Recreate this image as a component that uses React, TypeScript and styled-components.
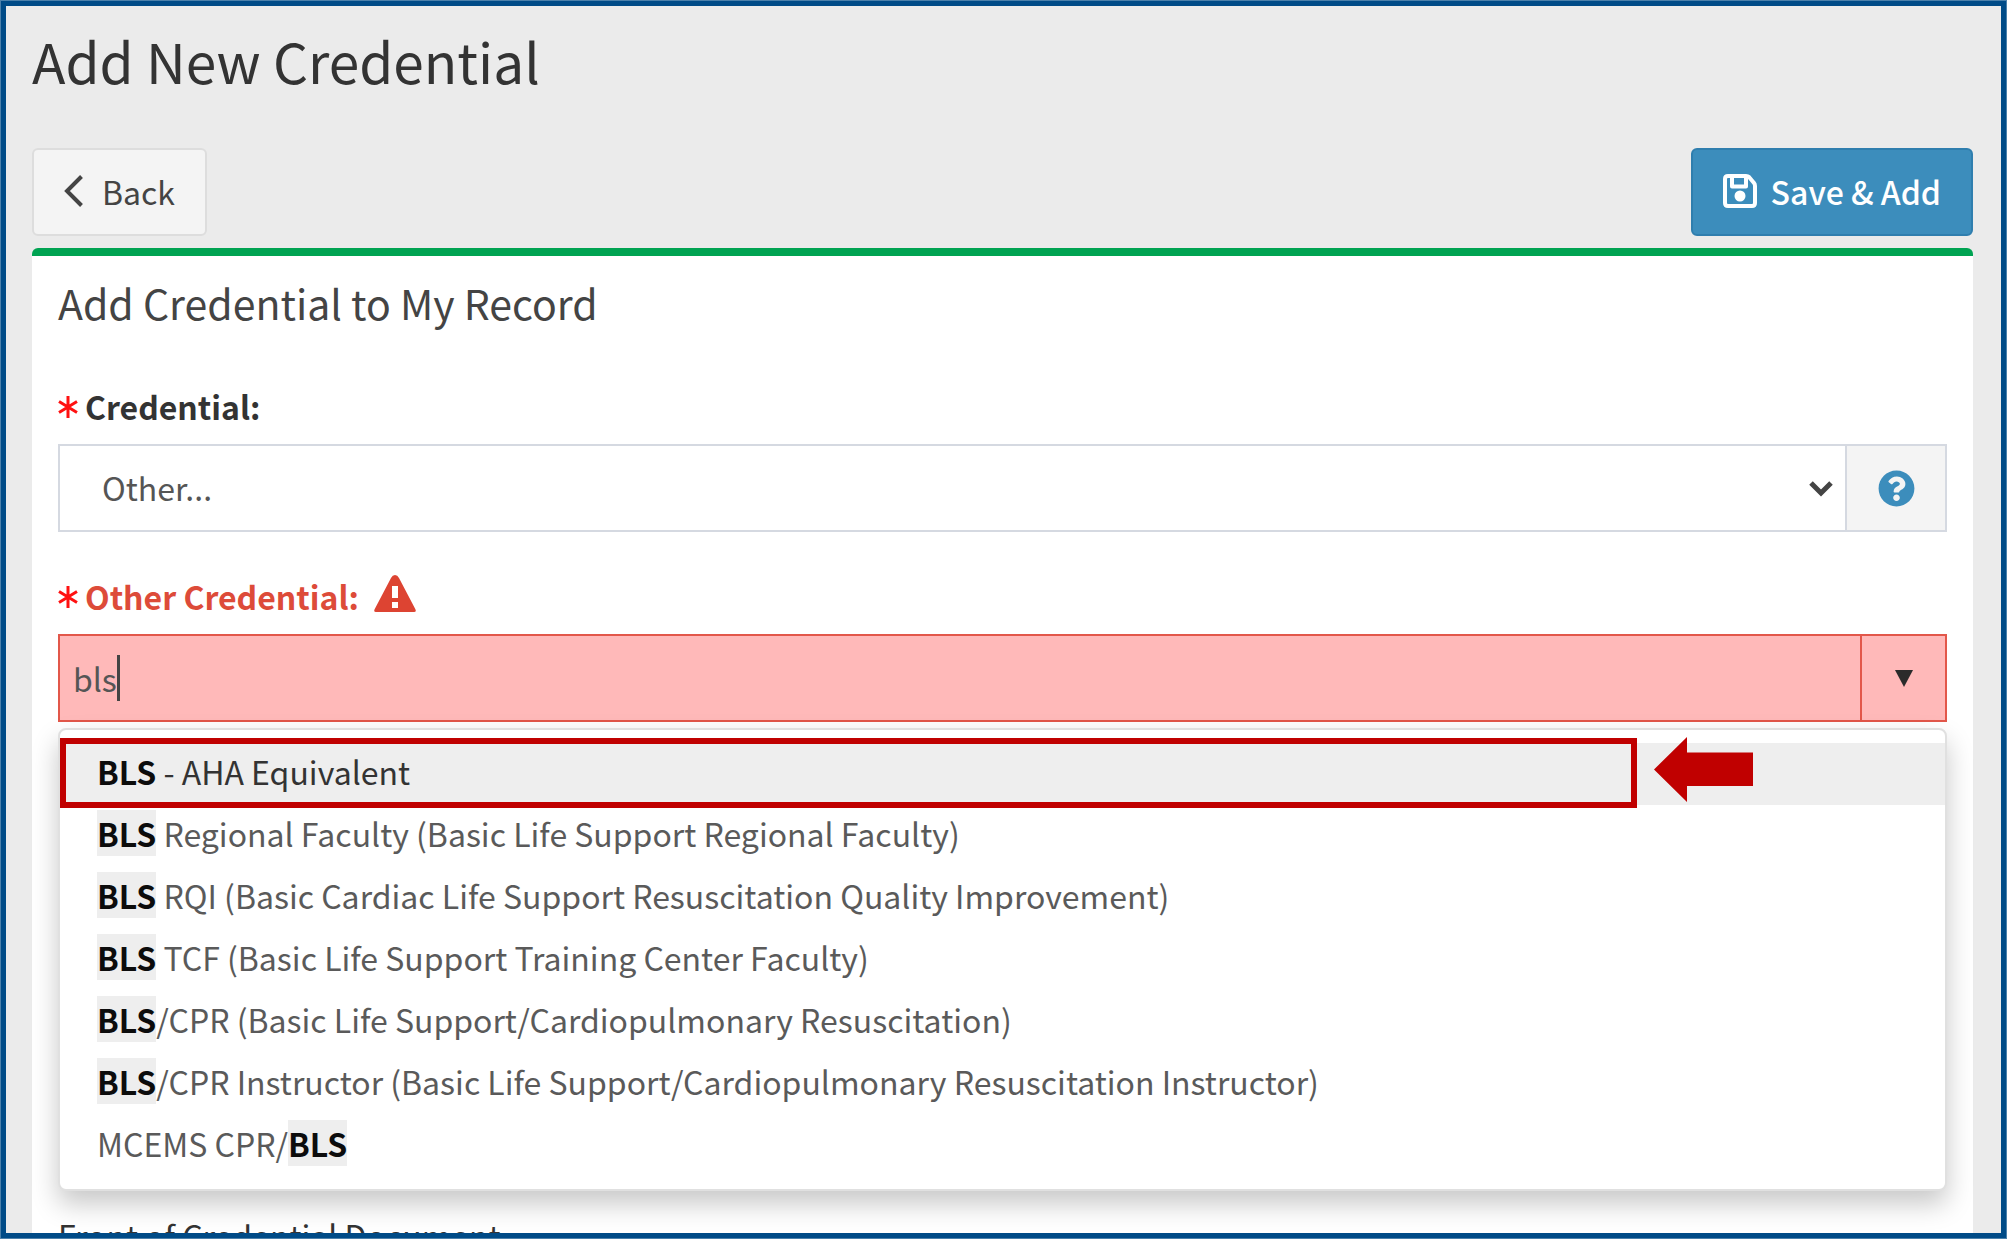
import React, { useState } from "react";
import styled, { createGlobalStyle } from "styled-components";
import { FaQuestionCircle } from "react-icons/fa";

const Global = createGlobalStyle`
  *, *::before, *::after { box-sizing: border-box; }
  body { margin: 0; }
  button, input, select { font: inherit; color: inherit; margin: 0; border-radius: 0; }
`;

const Frame = styled.div`
  height: 100vh;
  overflow: hidden;
  border: 6px solid #004b87;
  outline: 1px solid #4c81ab;
  outline-offset: -1px;
  background: #ebebeb;
  color: #555;
  font-family: "Noto Sans CJK SC", "Noto Sans", sans-serif;
  font-size: 32px;
  line-height: 44px;
`;

const Page = styled.main`
  padding: 20px 28px 0 26px;
`;

const Title = styled.h1`
  margin: 0;
  font-size: 55px;
  line-height: 68px;
  font-weight: 400;
  color: #333;
`;

const Toolbar = styled.div`
  display: flex;
  justify-content: space-between;
  margin-top: 54px;
`;

const Button = styled.button<{ $primary?: boolean }>`
  display: flex;
  align-items: center;
  gap: ${(p) => (p.$primary ? 14 : 19)}px;
  height: 88px;
  padding: 0 30px 2px;
  border: 2px solid ${(p) => (p.$primary ? "#2f7eae" : "#ddd")};
  border-radius: 6px;
  background: ${(p) => (p.$primary ? "#3c8dbc" : "#f4f4f4")};
  color: ${(p) => (p.$primary ? "#fff" : "#444")};
  font-weight: ${(p) => (p.$primary ? 500 : 400)};
`;

const Card = styled.section`
  margin-top: 12px;
  padding: 20px 26px 60px;
  border-top: 8px solid #00a352;
  border-radius: 6px;
  background: #fff;
`;

const CardTitle = styled.h2`
  margin: 0 0 56px;
  font-size: 41px;
  line-height: 52px;
  font-weight: 400;
  color: #444;
`;

const Label = styled.label<{ $error?: boolean }>`
  display: flex;
  align-items: center;
  gap: 7px;
  margin-bottom: 16px;
  font-weight: 700;
  color: ${(p) => (p.$error ? "#dd4b39" : "#333")};
`;

const PlainLabel = styled.div`
  margin-top: 22px;
  color: #333;
`;

const WarningIcon = styled.svg`
  margin: 0 0 6px 8px;
`;

const Control = styled.div<{ $error?: boolean }>`
  display: flex;
  height: 88px;
  margin-bottom: ${(p) => (p.$error ? 6 : 42)}px;
  border: 2px solid ${(p) => (p.$error ? "#e2574a" : "#d5d9e1")};
  background: ${(p) => (p.$error ? "#ffb9b9" : "#fff")};
`;

const SelectBox = styled.div`
  display: grid;
  flex: 1;
  align-items: center;

  > * {
    grid-area: 1 / 1;
  }

  svg {
    justify-self: end;
    margin-right: 12px;
    pointer-events: none;
  }
`;

const Select = styled.select`
  appearance: none;
  height: 100%;
  border: 0;
  outline: 0;
  padding: 0 42px 2px;
  background: transparent;
`;

const HelpButton = styled.button`
  display: grid;
  place-items: center;
  width: 100px;
  padding: 0;
  border: 0;
  border-left: 2px solid #d5d9e1;
  background: #f4f4f4;

  svg {
    color: #3c8dbc;
  }
`;

const TextArea = styled.div`
  display: flex;
  flex: 1;
  align-items: center;
  padding-left: 13px;
`;

const TextInput = styled.input`
  field-sizing: content;
  padding: 0;
  border: 0;
  outline: 0;
  background: transparent;
  caret-color: transparent;
`;

const Caret = styled.span`
  width: 3px;
  height: 46px;
  background: #444;
`;

const ToggleButton = styled.button`
  display: grid;
  place-items: center;
  width: 85px;
  padding: 0;
  border: 0;
  border-left: 2px solid #e2574a;
  background: transparent;
`;

const Menu = styled.div`
  position: relative;
  padding: 13px 0 12px;
  border: 2px solid #e0e0e0;
  border-radius: 8px;
  background: #fff;
  box-shadow: 0 13px 27px rgba(0, 0, 0, 0.22);
`;

const OptionList = styled.ul`
  margin: 0;
  padding: 0;
  list-style: none;
`;

const Option = styled.li<{ $active?: boolean }>`
  padding: 0 37px 6px;
  line-height: 56px;
  background: ${(p) => (p.$active ? "#eee" : "transparent")};
  color: ${(p) => (p.$active ? "#333" : "#5a5a5a")};
`;

const Match = styled.strong`
  background: #eee;
  color: #0c0c0c;
  font-weight: 700;
`;

const Highlight = styled.div`
  position: absolute;
  top: 8px;
  left: 0;
  right: 308px;
  height: 70px;
  border: 6px solid #c00000;
  pointer-events: none;
`;

const Arrow = styled.svg`
  position: absolute;
  top: 7px;
  right: 192px;
`;

const Asterisk = () => (
  <svg width="20" height="24" viewBox="0 0 20 24" stroke="#f11" strokeWidth="3" aria-hidden="true">
    <path d="M10 2v22M1 7.5l18 11M1 18.5l18-11" />
  </svg>
);

const options = [
  "BLS - AHA Equivalent",
  "BLS Regional Faculty (Basic Life Support Regional Faculty)",
  "BLS RQI (Basic Cardiac Life Support Resuscitation Quality Improvement)",
  "BLS TCF (Basic Life Support Training Center Faculty)",
  "BLS/CPR (Basic Life Support/Cardiopulmonary Resuscitation)",
  "BLS/CPR Instructor (Basic Life Support/Cardiopulmonary Resuscitation Instructor)",
  "MCEMS CPR/BLS",
];

const renderMatch = (text: string) =>
  text.split(/(BLS)/).map((part, i) => (part === "BLS" ? <Match key={i}>{part}</Match> : part));

export default function App() {
  const [query, setQuery] = useState("bls");

  return (
    <Frame>
      <Global />
      <Page>
        <Title>Add New Credential</Title>
        <Toolbar>
          <Button type="button">
            <svg width="19" height="32" viewBox="0 0 19 32" fill="none" stroke="currentColor" strokeWidth="4" aria-hidden="true">
              <path d="M17.500 1.500L3 16l14.500 14.500" />
            </svg>
            Back
          </Button>
          <Button type="button" $primary>
            <svg width="34" height="34" viewBox="0 0 34 34" fill="none" stroke="currentColor" strokeWidth="4" strokeLinejoin="round" aria-hidden="true">
              <path d="M5 2H23Q25 2 26 3L31 9Q32 10 32 12V29Q32 32 29 32H5Q2 32 2 29V5Q2 2 5 2Z" />
              <path d="M9 3v9.500h14V3" />
              <circle cx="17" cy="22" r="5.500" fill="currentColor" stroke="none" />
            </svg>
            Save &amp; Add
          </Button>
        </Toolbar>
        <Card>
          <CardTitle>Add Credential to My Record</CardTitle>

          <Label htmlFor="credential">
            <Asterisk />
            Credential:
          </Label>
          <Control>
            <SelectBox>
              <Select id="credential">
                <option>Other...</option>
              </Select>
              <svg width="24" height="18" viewBox="0 0 24 18" fill="none" stroke="#444" strokeWidth="5" aria-hidden="true">
                <path d="M2 4l10 10L22 4" />
              </svg>
            </SelectBox>
            <HelpButton type="button" aria-label="Help">
              <FaQuestionCircle size={37} />
            </HelpButton>
          </Control>

          <Label htmlFor="other-credential" $error>
            <Asterisk />
            Other Credential:
            <WarningIcon width="42" height="37" viewBox="0 0 42 37" aria-hidden="true">
              <path d="M21 0Q23.500 0 25 3L41 33.500Q43 37 40 37H2Q-1 37 1 33.500L17 3Q18.500 0 21 0Z" fill="#dd4432" />
              <path d="M18 11h6v12h-6zM18 27h6v6h-6z" fill="#fff" />
            </WarningIcon>
          </Label>
          <Control $error>
            <TextArea>
              <TextInput
                id="other-credential"
                type="text"
                value={query}
                onChange={(e) => setQuery(e.target.value)}
              />
              <Caret />
            </TextArea>
            <ToggleButton type="button" aria-label="Show options">
              <svg width="18" height="17" viewBox="0 0 18 17" fill="#2b2b2b" aria-hidden="true">
                <path d="M0 0h18L9 17z" />
              </svg>
            </ToggleButton>
          </Control>

          <Menu>
            <OptionList>
              {options.map((text, i) => (
                <Option key={text} $active={i === 0}>
                  {renderMatch(text)}
                </Option>
              ))}
            </OptionList>
            <Highlight />
            <Arrow width="99" height="65" viewBox="0 0 99 65" fill="#c00000" aria-hidden="true">
              <path d="M0 32.500L33 0v15.500h66v33.500H33V65z" />
            </Arrow>
          </Menu>

          <PlainLabel>Front of Credential Document</PlainLabel>
        </Card>
      </Page>
    </Frame>
  );
}
